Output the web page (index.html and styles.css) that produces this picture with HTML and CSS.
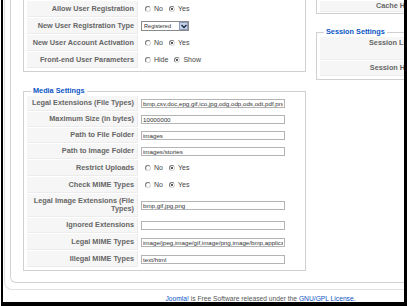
FILE: index.html
```html
<!DOCTYPE html>
<html lang="en">
<head>
  <meta charset="UTF-8" />
  <title>Global Configuration - System</title>
  <link rel="stylesheet" href="styles.css">
</head>
<body>
  <div class="frame">
    <div class="page">
      <div class="outer">
        <div class="box">
          <div class="cols">

            <!-- LEFT COLUMN -->
            <div class="col col-left">
              <fieldset class="set cut">
                <table class="admintable">
                  <tr>
                    <td class="key">Allow User Registration</td>
                    <td class="val">
                      <span class="radio"></span><span class="opt">No</span>
                      <span class="radio on"></span><span class="opt">Yes</span>
                    </td>
                  </tr>
                  <tr>
                    <td class="key">New User Registration Type</td>
                    <td class="val">
                      <span class="select">
                        <span class="select-text">Registered</span>
                        <span class="select-btn">
                          <svg width="6" height="5" viewBox="0 0 6 5"><path d="M0.5 1 L3 3.6 L5.5 1" fill="none" stroke="#1d2a44" stroke-width="1.4"/></svg>
                        </span>
                      </span>
                    </td>
                  </tr>
                  <tr>
                    <td class="key">New User Account Activation</td>
                    <td class="val">
                      <span class="radio"></span><span class="opt">No</span>
                      <span class="radio on"></span><span class="opt">Yes</span>
                    </td>
                  </tr>
                  <tr>
                    <td class="key">Front-end User Parameters</td>
                    <td class="val">
                      <span class="radio"></span><span class="opt">Hide</span>
                      <span class="radio on"></span><span class="opt">Show</span>
                    </td>
                  </tr>
                </table>
              </fieldset>

              <fieldset class="set">
                <legend>Media Settings</legend>
                <table class="admintable">
                  <tr class="r16">
                    <td class="key">Legal Extensions (File Types)</td>
                    <td class="val"><input class="text" type="text" value="bmp,csv,doc,epg,gif,ico,jpg,odg,odp,ods,odt,pdf,png,ppt,swf,txt,xcf,xls,BMP,CSV,DOC,EPG,GIF,ICO,JPG"></td>
                  </tr>
                  <tr class="r16">
                    <td class="key">Maximum Size (in bytes)</td>
                    <td class="val"><input class="text" type="text" value="10000000"></td>
                  </tr>
                  <tr class="r16">
                    <td class="key">Path to File Folder</td>
                    <td class="val"><input class="text" type="text" value="images"></td>
                  </tr>
                  <tr class="r16">
                    <td class="key">Path to Image Folder</td>
                    <td class="val"><input class="text" type="text" value="images/stories"></td>
                  </tr>
                  <tr>
                    <td class="key">Restrict Uploads</td>
                    <td class="val">
                      <span class="radio"></span><span class="opt">No</span>
                      <span class="radio on"></span><span class="opt">Yes</span>
                    </td>
                  </tr>
                  <tr>
                    <td class="key">Check MIME Types</td>
                    <td class="val">
                      <span class="radio"></span><span class="opt">No</span>
                      <span class="radio on"></span><span class="opt">Yes</span>
                    </td>
                  </tr>
                  <tr class="r24">
                    <td class="key">Legal Image Extensions (File Types)</td>
                    <td class="val"><input class="text" type="text" value="bmp,gif,jpg,png"></td>
                  </tr>
                  <tr class="r16">
                    <td class="key">Ignored Extensions</td>
                    <td class="val"><input class="text" type="text" value=""></td>
                  </tr>
                  <tr>
                    <td class="key">Legal MIME Types</td>
                    <td class="val"><input class="text" type="text" value="image/jpeg,image/gif,image/png,image/bmp,application/x-shockwave-flash"></td>
                  </tr>
                  <tr>
                    <td class="key">Illegal MIME Types</td>
                    <td class="val"><input class="text" type="text" value="text/html"></td>
                  </tr>
                </table>
              </fieldset>
            </div>

            <!-- RIGHT COLUMN -->
            <div class="col col-right">
              <fieldset class="set cut cut-small">
                <table class="admintable">
                  <tr class="r12">
                    <td class="key">Cache Handler</td>
                    <td class="val"></td>
                  </tr>
                </table>
              </fieldset>

              <fieldset class="set set-session">
                <legend>Session Settings</legend>
                <table class="admintable">
                  <tr class="r24">
                    <td class="key top">Session Lifetime</td>
                    <td class="val"></td>
                  </tr>
                  <tr class="r15">
                    <td class="key">Session Handler</td>
                    <td class="val"></td>
                  </tr>
                </table>
              </fieldset>
            </div>

          </div>
        </div>
      </div>

      <div class="footer">
        <a href="#">Joomla!</a> is Free Software released under the
        <a href="#">GNU/GPL License.</a>
      </div>
    </div>
  </div>
</body>
</html>
```

FILE: styles.css
```css
/* Reset */
* {
  box-sizing: border-box;
}

html,
body {
  margin: 0;
  padding: 0;
  background: #fff;
}

body {
  font-family: 'Liberation Sans', Arial, Helvetica, sans-serif;
  font-size: 7.3px;
  color: #333;
}

/* black window frame round the shot */
.frame {
  margin-left: 1px;
  width: 406px;
  height: 306px;
  border-left: 2px solid #000;
  border-right: 3px solid #000;
  border-bottom: 4px solid #000;
  overflow: hidden;
}

.page {
  width: 515px;
}

/* rounded boxes (content-box / element-box) */
.outer {
  margin-left: 1px;
  border: 1px solid #e2e2e2;
  border-top: 0;
  border-radius: 0 0 8px 8px;
  padding: 0 5px 6px 5px;
}

.box {
  border: 1px solid #d2d2d2;
  border-top: 0;
  border-radius: 0 0 6px 6px;
  padding: 0 12px 11px 12px;
}

.cols {
  display: flex;
  align-items: flex-start;
  gap: 10px;
}

.col-left {
  width: 283px;
  flex: none;
}

.col-right {
  flex: 1;
}

/* fieldsets */
.set {
  margin: 0;
  padding: 0 2px 2px 2px;
  border: 1px solid #d0d0d0;
}

.set + .set {
  margin-top: 15px;
}

.set.cut {
  border-top: 0;
}

.set.cut-small {
  padding-bottom: 0;
}

.set.set-session {
  margin-top: 14px;
}

legend {
  margin-left: 5px;
  padding: 0 2px;
  font-size: 7.3px;
  line-height: 8px;
  font-weight: bold;
  color: #0b55c4;
}

/* admin tables */
.admintable {
  width: 100%;
  border-spacing: 1px;
}

.admintable td {
  height: 16px;
  padding: 0;
  line-height: 8px;
}

.admintable .r16 td {
  height: 15px;
}

.admintable .r24 td {
  height: 23px;
}

.admintable .r12 td {
  height: 11px;
}

.admintable .r15 td {
  height: 15px;
}

.key {
  width: 111px;
  padding-right: 3px !important;
  background: #f6f6f6;
  border-bottom: 1px solid #ececec;
  border-right: 1px solid #ececec;
  text-align: right;
  font-weight: bold;
  color: #666;
}

.key.top {
  vertical-align: top;
  padding-top: 2px !important;
}

.val {
  padding-left: 2px !important;
  white-space: nowrap;
  color: #333;
}

/* radio buttons */
.radio {
  display: inline-block;
  width: 6px;
  height: 6px;
  margin: 0 3px 0 4px;
  border: 1px solid;
  border-color: #7a7a7a #d8d8d8 #d8d8d8 #7a7a7a;
  border-radius: 50%;
  background: #fff;
  vertical-align: -1px;
  position: relative;
}

.radio.on::after {
  content: '';
  position: absolute;
  left: 1px;
  top: 1px;
  width: 2px;
  height: 2px;
  border-radius: 50%;
  background: #222;
}

.opt {
  font-size: 7px;
  color: #444;
}

/* text inputs */
.text {
  display: block;
  width: 144px;
  height: 9px;
  margin: 0;
  padding: 0 1px;
  border: 1px solid #b4b4b4;
  font-family: 'Liberation Sans', Arial, sans-serif;
  font-size: 6.2px;
  color: #333;
  background: #fff;
  outline: none;
}

/* select box */
.select {
  display: inline-flex;
  align-items: center;
  width: 48px;
  height: 10px;
  border: 1px solid #8a8a8a;
  background: #fff;
  vertical-align: middle;
}

.select-text {
  flex: 1;
  padding-left: 2px;
  font-size: 5.6px;
  color: #333;
}

.select-btn {
  display: flex;
  align-items: center;
  justify-content: center;
  width: 9px;
  height: 8px;
  margin-right: 0;
  border: 1px solid #8b9bbb;
  background: #c9d4e8;
}

/* footer */
.footer {
  margin-top: 4px;
  line-height: 9px;
  text-align: center;
  font-size: 6.7px;
  color: #555;
}

.footer a {
  color: #0b55c4;
  text-decoration: none;
}
```
